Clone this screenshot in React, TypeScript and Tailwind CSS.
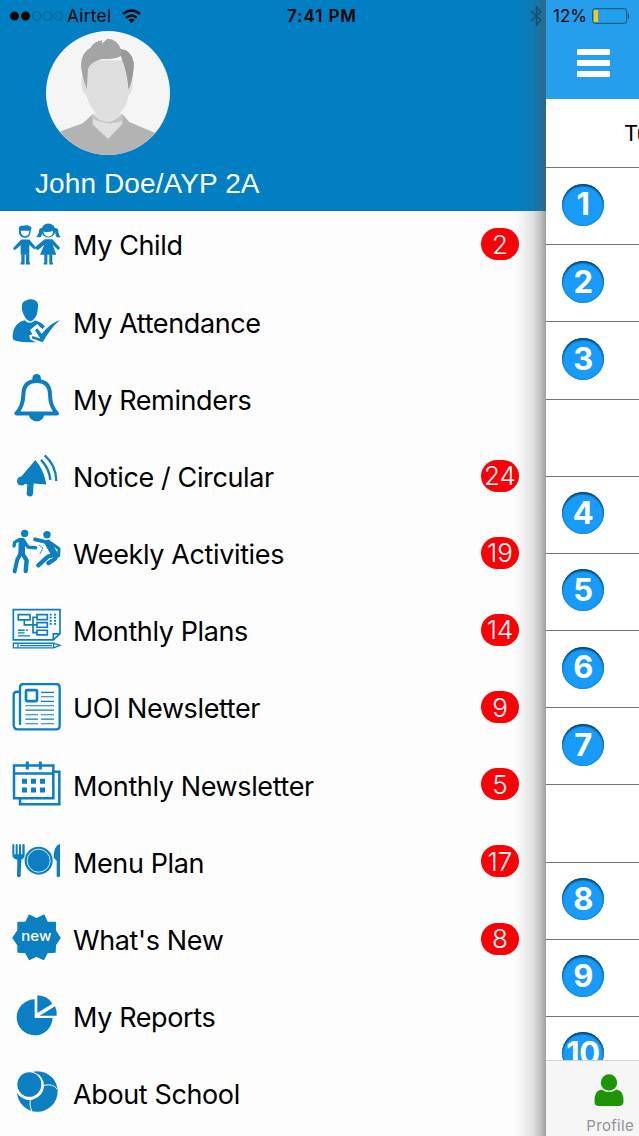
import type { ReactNode } from 'react';

interface MenuItem {
  label: string;
  count?: number;
  viewBox: string;
  icon: ReactNode;
}

const BLUE = '#0b7fc1';

const menuItems: MenuItem[] = [
  {
    label: 'My Child',
    count: 2,
    viewBox: '30 21.6 156 156',
    icon: (
      <>
        <path d="M57 52 Q54 38 68 39 Q84 35 92 42 Q97 46 92 53 L91 62 Q87 75 75 75 Q62 75 57 62Z" />
        <path d="M62 54 H88 Q88 70 75 70 Q63 70 62 54Z" fill="white" />
        <path d="M64 80 H88 L107 103 L103 110 L88 96 V126 H62 V97 L44 112 L39 106Z" />
        <path d="M64 125h10v26h-10zM78 125h10v26h-10zM62 149h12v6H62zM78 149h12v6H78zM133 124h9v28h-9zM148 124h9v28h-9zM131 150h11v5h-11zM148 150h11v5h-11z" />
        <circle cx="145" cy="53" r="21" />
        <path d="M130 56 Q145 60 159 54 Q160 71 146 71 Q133 71 130 56Z" fill="white" />
        <path d="M128 47 Q115 44 117 59 L110 72 Q124 78 127 61ZM163 46 Q176 45 175 58 Q177 68 182 72 Q168 80 166 61Z" />
        <path d="M134 79 H157 L180 105 L175 112 L158 96 L169 126 H120 L133 96 L113 112 L103 105Z" />
      </>
    ),
  },
  {
    label: 'My Attendance',
    viewBox: '30 253.2 156 156',
    icon: (
      <>
        <path d="M66 292 Q62 268 78 264 Q92 256 106 264 Q118 270 113 292 Q111 318 91 327 Q74 322 66 292Z" />
        <path d="M74 323 Q88 338 105 324 Q126 329 136 343 L129 351 L112 337 L91 354 L97 365 L88 368 L90 380 L108 389 Q38 390 38 376 Q37 333 74 323Z" />
        <path d="M97 370 L121 378 L105 353 L112 347 L125 364 Q148 333 180 322 Q151 347 128 389 L95 377Z" />
        <path d="M91 354 L112 337 L126 354 L136 343" fill="none" stroke="white" strokeWidth="4" />
      </>
    ),
  },
  {
    label: 'My Reminders',
    viewBox: '30 34.8 156 156',
    icon: (
      <>
        <path
          d="M49 153 H171 Q151 133 150 98 Q150 56 110 56 Q70 56 70 98 Q69 133 49 153Z"
          fill="none"
          stroke={BLUE}
          strokeWidth="12"
          strokeLinejoin="round"
        />
        <circle cx="110" cy="48" r="13" />
        <path d="M86 155 H133 Q131 177 110 177 Q89 177 86 155Z" />
      </>
    ),
  },
  {
    label: 'Notice / Circular',
    count: 24,
    viewBox: '30 266.2 156 156',
    icon: (
      <>
        <path d="M106 293 Q132 322 139 367 L101 364 L99 397 Q97 403 90 403 Q80 402 80 394 L82 366 Q75 363 70 369 Q54 372 51 359 Q50 345 64 343Z" />
        <path
          d="M123 293 Q148 319 151 353M134 279 Q168 308 169 356"
          fill="none"
          stroke={BLUE}
          strokeWidth="7"
        />
      </>
    ),
  },
  {
    label: 'Weekly Activities',
    count: 19,
    viewBox: '30 38.8 156 156',
    icon: (
      <>
        <circle cx="74" cy="55" r="11" />
        <circle cx="141" cy="59" r="11" />
        <g fill="none" stroke={BLUE} strokeLinecap="round" strokeLinejoin="round">
          <path d="M68 76 L65 110 L52 133 L44 169" strokeWidth="12" />
          <path d="M66 78 L65 113" strokeWidth="20" />
          <path d="M68 117 L80 136 L77 168" strokeWidth="13" />
          <path d="M59 73 L44 82 L42 93M72 78 L84 96 L107 98" strokeWidth="10" />
          <path d="M105 73 L138 81" strokeWidth="11" />
          <path d="M144 84 L162 115" strokeWidth="20" />
          <path d="M161 119 L143 125 L115 151M171 119 L165 131 L145 144" strokeWidth="13" />
          <path d="M153 84 L177 101 L176 122" strokeWidth="9" />
          <path d="M118 91 L129 99 L120 116" strokeWidth="2.500" />
        </g>
      </>
    ),
  },
  {
    label: 'Monthly Plans',
    count: 14,
    viewBox: '30 270.3 156 156',
    icon: (
      <g fill="none" stroke={BLUE} strokeWidth="5">
        <path d="M40 284 H180 V356 L160 375 H40Z M160 375 V357 H180" />
        <path d="M55 299h35v16h-35zM111 299h31v15h-31zM111 323h31v14h-31zM111 346h31v14h-31z" />
        <path d="M73 315 V330 H111M111 307 H99 V353 H111" />
        <path d="M149 299h6M162 299h6M149 308h6M162 308h6M149 318h6M162 318h6M149 327h6M162 327h6" />
        <path d="M54 346h20M78 346h5M54 354h20M54 363h36" strokeWidth="4" />
        <path d="M40 385 H161 L180 391.500 L161 399 H40ZM54 385v14M60 392H156M161 385v14" strokeWidth="4" />
      </g>
    ),
  },
  {
    label: 'UOI Newsletter',
    count: 9,
    viewBox: '30 36.8 156 156',
    icon: (
      <g fill="none" stroke={BLUE} strokeWidth="7">
        <path d="M60 160 V50 Q60 40 70 40 H169 Q179 40 179 50 V165 Q179 176 168 176 H54 Q41 176 41 163 V73 Q41 63 51 63 H60" strokeLinecap="round" />
        <rect x="78" y="58" width="33" height="33" rx="3" strokeWidth="8" />
        <path d="M123 65h39M123 78h39M123 92h39M76 105h86M76 118h86M76 132h38M123 132h39M76 145h38M123 145h39M76 159h38M123 159h39" strokeWidth="3.500" />
      </g>
    ),
  },
  {
    label: 'Monthly Newsletter',
    count: 5,
    viewBox: '30 268.4 156 156',
    icon: (
      <>
        <g fill="none" stroke={BLUE} strokeWidth="7.500">
          <path d="M42 285 H160 V383 H42ZM42 309 H160M161 304 H178 V401 H60 V385" />
          <path d="M82 273v24M121 273v24" strokeWidth="9" />
        </g>
        <path d="M66 325h15v15h-15zM93 325h15v15h-15zM120 325h15v15h-15zM66 351h15v15h-15zM93 351h15v15h-15zM120 351h15v15h-15z" />
      </>
    ),
  },
  {
    label: 'Menu Plan',
    count: 17,
    viewBox: '30 34.9 156 156',
    icon: (
      <>
        <circle cx="116" cy="106" r="42" />
        <circle cx="116" cy="106" r="34.500" fill="none" stroke="white" strokeWidth="2.500" />
        <path d="M37 58q3-4 6 0v29h4V58q3-4 6 0v29h4V58q3-4 6 0v29h4V58q3-4 7 0v30q0 11-10 15l-2 49q-5 7-11 0l1-49q-15-3-15-15zM180 55v98q-5 5-10 0v-47l-9-8q-1-37 19-43z" />
      </>
    ),
  },
  {
    label: "What's New",
    count: 8,
    viewBox: '30 266.5 156 156',
    icon: (
      <>
        <path
          d="M88 270 L109 281 L132 270 L142 292 L166 292 L166 316 L180 338 L166 360 L165 381 L142 382 L131 403 L109 393 L88 403 L77 382 L54 381 L54 360 L39 338 L54 316 L54 292 L77 292Z"
          stroke={BLUE}
          strokeWidth="4"
          strokeLinejoin="round"
        />
        <text x="109" y="348" textAnchor="middle" textLength="90" lengthAdjust="spacingAndGlyphs" fill="white" fontFamily="Inter, sans-serif" fontWeight="500" fontSize="43">
          new
        </text>
      </>
    ),
  },
  {
    label: 'My Reports',
    viewBox: '30 48 156 156',
    icon: (
      <>
        <path d="M104 73 V129 H158 A54 54 0 1 1 104 73Z" />
        <path d="M112 61 Q143 62 157 86 L112 114ZM165 94 Q171 106 170 122 H119Z" />
      </>
    ),
  },
  {
    label: 'About School',
    viewBox: '30 279.6 156 156',
    icon: (
      <>
        <circle cx="112" cy="350" r="61" />
        <path d="M92 290 L104 293 A42 42 0 0 1 101 373 Q73 383 50 354 L49 332Z" fill="white" />
        <ellipse cx="88" cy="329" rx="36" ry="37" />
        <path d="M91 373 Q87 390 95 410M131 332 Q158 325 172 343" fill="none" stroke="white" strokeWidth="3" />
      </>
    ),
  },
];

const periods = ['1', '2', '3', '', '4', '5', '6', '7', '', '8', '9', '10'];

function Avatar() {
  return (
    <svg viewBox="138 92 372 372" className="ml-[46px] block h-[124px] w-[124px] rounded-full bg-[#f5f5f6]">
      <path d="M138 415 L186 391 L248 369 L279 341 H367 L388 365 L466 398 L510 410 V464 H138Z" fill="#b3b3b4" />
      <path d="M278 340 H367 V373 L324 415 L278 373Z" fill="#e0e0e1" />
      <path d="M279 342 Q322 388 367 341 V363 Q323 377 279 355Z" fill="#c4c4c5" />
      <path d="M277 372 L324 418 L369 369" fill="none" stroke="#bdbdbe" strokeWidth="3" />
      <path d="M244 236 L263 180 H383 L398 237 Q401 274 386 285 Q379 326 351 345 Q324 363 295 346 Q270 325 259 285 Q242 271 244 236Z" fill="#dedede" />
      <path d="M260 267 Q243 216 243 193 Q245 154 272 142 Q283 122 307 120 L306 130 L322 115 Q351 116 363 147 Q395 151 401 187 Q402 227 386 267 Q382 216 364 166 Q348 177 306 176 Q270 185 264 206Z" fill="#a4a4a4" />
      <path d="M364 147 Q359 168 371 190 Q383 224 386 267 Q402 226 401 187 Q395 151 364 147Z" fill="#999999" />
    </svg>
  );
}

function StatusBar() {
  return (
    <div className="absolute inset-x-0 top-0 z-20 flex h-8 items-center text-black">
      <svg viewBox="0 0 56 12" className="ml-[9px] h-3 w-14 shrink-0">
        <circle cx="5.500" cy="6" r="4.500" />
        <circle cx="16.500" cy="6" r="4.500" />
        <g fill="none" stroke="#07567f" strokeWidth=".8">
          <circle cx="27.500" cy="6" r="4.200" />
          <circle cx="38.500" cy="6" r="4.200" />
          <circle cx="49" cy="6" r="4.200" />
        </g>
      </svg>
      <span className="mt-px ml-[2px] w-[55px] text-[17px] tracking-[0.4px]">Airtel</span>
      <svg viewBox="0 0 19 14" className="-mt-px h-3.5 w-[19px]" fill="none" stroke="black" strokeWidth="2.500">
        <path d="M1 5 Q9.500 -2 18 5M4.300 8.700 Q9.500 4.200 14.700 8.700" />
        <path d="M6.300 11 Q9.500 8.500 12.700 11 L9.500 14Z" fill="black" stroke="none" />
      </svg>
      <span className="mt-px ml-[146px] w-[80px] text-[17px] font-semibold whitespace-nowrap tracking-[0.9px]">7:41 PM</span>
      <svg viewBox="0 0 12 20" className="ml-[163px] h-5 w-3" fill="none" stroke="#174e70" strokeWidth="1.500">
        <path d="M1 5 L11 14.500 L6.500 19 V1 L11 5.500 L1 15" />
      </svg>
      <span className="mt-px ml-[11px] w-[39px] text-[17px] whitespace-nowrap">12%</span>
      <svg viewBox="0 0 38 16" className="h-4 w-[38px]">
        <rect x=".7" y=".7" width="34" height="14.600" rx="2.500" fill="none" stroke="#16506f" />
        <path d="M1.700 2 H6 V14 H1.700Z" fill="#fac51d" />
        <path d="M36 5.500 Q38 8 36 10.500Z" />
      </svg>
    </div>
  );
}

function MenuRow({ item }: { item: MenuItem }) {
  return (
    <li className="flex h-[77.180px] items-center pl-2.5">
      <svg viewBox={item.viewBox} fill={BLUE} className="h-13 w-13 shrink-0">
        {item.icon}
      </svg>
      <span className="mt-0.5 ml-[11px] flex-1 text-[27px] tracking-[-0.38px] whitespace-nowrap text-black">
        {item.label}
      </span>
      {item.count !== undefined && (
        <span className="mr-[27px] mb-[3px] flex h-8 w-[38px] items-center justify-center rounded-[16px] bg-[#fb0007] text-[26px] font-light text-white">
          {item.count}
        </span>
      )}
    </li>
  );
}

function Drawer() {
  return (
    <aside className="h-full w-[546px] shrink-0 bg-[#fdfdfd]">
      <header className="h-[211px] bg-[#027fc2] pt-[31px]">
        <Avatar />
        <h1 className="mt-[12px] ml-[35px] font-['Liberation_Sans',sans-serif] text-[28px] leading-[34px] tracking-[0.1px] whitespace-nowrap text-white">
          John Doe/AYP 2A
        </h1>
      </header>
      <ul className="-mt-1">
        {menuItems.map((item) => (
          <MenuRow key={item.label} item={item} />
        ))}
      </ul>
    </aside>
  );
}

function Timetable() {
  return (
    <main className="relative flex h-full w-[93px] shrink-0 flex-col bg-white">
      {/* shadow cast on the open drawer */}
      <div className="absolute inset-y-0 -left-8 w-8 bg-[linear-gradient(to_right,#5550_0%,#55555512_30%,#5555552e_60%,#55555560_85%,#55555590_100%)]" />
      <div className="flex h-[99px] shrink-0 flex-col gap-[5px] bg-[#259fec] pt-[49px] pl-[31px]">
        <span className="h-1.5 w-[33px] rounded-[1px] bg-white" />
        <span className="h-1.5 w-[33px] rounded-[1px] bg-white" />
        <span className="h-1.5 w-[33px] rounded-[1px] bg-white" />
      </div>
      <div className="flex h-[69px] shrink-0 items-center overflow-hidden border-b border-[#777] pl-[78px] text-[22px] text-black">
        Tue
      </div>
      <div className="min-h-0 flex-1 overflow-hidden">
        {periods.map((period, i) => (
          <div key={i} className="flex h-[77.180px] items-center border-b border-[#777] pl-4">
            {period && (
              <span className="mb-[3px] flex h-[42px] w-[42px] items-center justify-center rounded-full bg-[#199bfa] text-[31px] font-bold tracking-[-0.5px] text-white shadow-[inset_0_2px_2px_#064572,inset_0_0_2px_#0969a8]">
                {period}
              </span>
            )}
          </div>
        ))}
      </div>
      <nav className="flex h-[76px] shrink-0 flex-col items-end border-t border-[#d0d0d2] bg-[#f6f6f7] pt-[13px]">
        <svg viewBox="0 0 30 33" className="mr-[15px] h-[33px] w-[30px]" fill="#1d9306">
          <circle cx="15" cy="8.500" r="8.200" />
          <path d="M7.500 15.500 Q15 20.500 22.500 15.500 Q30 16.500 29.500 28 Q29 32 25 32 H5 Q.5 32 .5 28 Q0 16.500 7.500 15.500Z" />
        </svg>
        <span className="mt-[9px] mr-[5px] text-[15px] leading-5 tracking-[0.3px] text-[#929294]">Profile</span>
      </nav>
    </main>
  );
}

export default function App() {
  return (
    <div className="relative flex h-[1136px] w-[639px] overflow-hidden font-['Inter','Liberation_Sans',sans-serif]">
      <StatusBar />
      <Drawer />
      <Timetable />
    </div>
  );
}
